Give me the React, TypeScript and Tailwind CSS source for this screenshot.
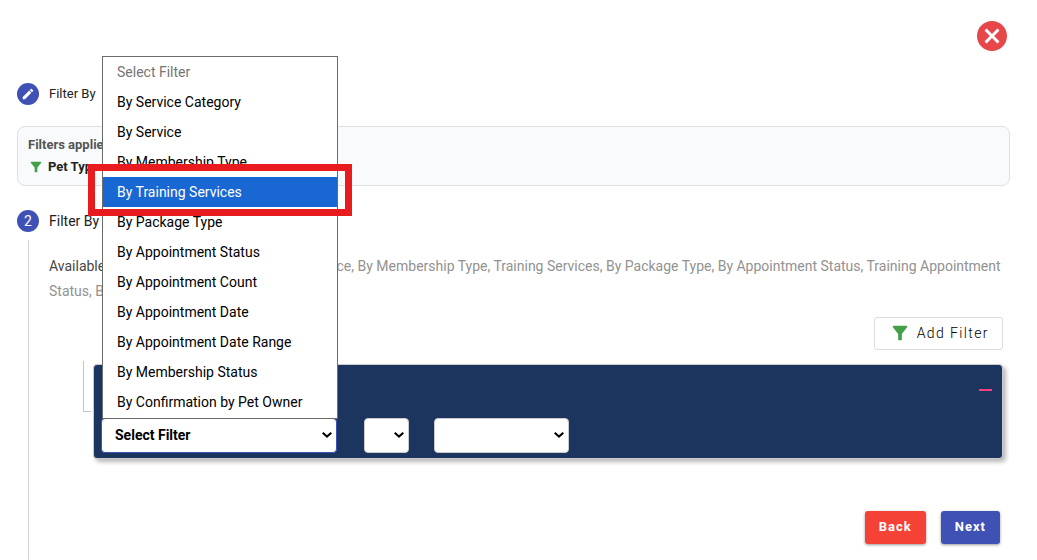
import React from "react";
import { MdCancel, MdEdit, MdFilterAlt } from "react-icons/md";

const filterOptions = [
  "Select Filter",
  "By Service Category",
  "By Service",
  "By Membership Type",
  "By Training Services",
  "By Package Type",
  "By Appointment Status",
  "By Appointment Count",
  "By Appointment Date",
  "By Appointment Date Range",
  "By Membership Status",
  "By Confirmation by Pet Owner",
];

const highlighted = "By Training Services";

function StepBadge({ children }: { children: React.ReactNode }) {
  return (
    <span className="flex size-[22px] shrink-0 items-center justify-center rounded-full bg-[#3f51b5] text-sm text-white">
      {children}
    </span>
  );
}

function SelectArrow() {
  return (
    <svg
      viewBox="0 0 10 6"
      aria-hidden="true"
      className="pointer-events-none absolute top-3.5 right-[5px] h-1.5 w-2.5"
      fill="none"
      stroke="#000000"
      strokeWidth="2"
    >
      <path d="M0.7 0.8 5 4.6 9.3 0.8" />
    </svg>
  );
}

function FilterMenu() {
  return (
    <ul
      role="listbox"
      aria-label="Filter options"
      className="absolute bottom-[34px] left-px z-10 w-full border border-[#6b6b6b] bg-white pb-px text-sm text-black"
    >
      {filterOptions.map((option, index) => {
        const active = option === highlighted;
        return (
          <li
            key={option}
            role="option"
            aria-selected={active}
            aria-disabled={index === 0}
            className={
              active
                ? "relative bg-[#1967d2] px-3.5 leading-[30px] text-white"
                : index === 0
                  ? "px-3.5 leading-[30px] text-[#757575]"
                  : "px-3.5 leading-[30px]"
            }
          >
            {option}
            {active && (
              <span className="absolute -inset-x-[15px] -top-[13px] -bottom-[9px] border-[7px] border-[#e81c1f]" />
            )}
          </li>
        );
      })}
    </ul>
  );
}

export default function App() {
  return (
    <main
      className="flex min-h-screen flex-col bg-white pr-[27px] pl-[17px] text-[#212121]"
      style={{ fontFamily: 'Roboto, "Liberation Sans", sans-serif' }}
    >
      <header className="flex justify-end pt-[18px]">
        <button type="button" aria-label="Close" className="text-[#e84749]">
          <MdCancel size={36} />
        </button>
      </header>

      <h2 className="mt-[29px] flex items-center gap-2.5 text-[13px]">
        <StepBadge>
          <MdEdit size={14} />
        </StepBadge>
        Filter By
      </h2>

      <section className="mt-[21px] rounded-lg border border-[#dfdfdf] bg-[#f8fafc] px-2.5 pt-1.5 pb-[7px] text-[13px] font-bold">
        <p className="leading-[23px] text-[#555555]">Filters applied:</p>
        <p className="flex items-center gap-1 leading-[22px] text-[#222222]">
          <MdFilterAlt size={16} className="text-[#43a047]" />
          Pet Type
        </p>
      </section>

      <h2 className="mt-6 flex items-center gap-2.5 text-sm">
        <StepBadge>2</StepBadge>
        Filter By
      </h2>

      <div className="mt-2 flex flex-1 gap-2.5">
        <div className="flex w-[22px] shrink-0 justify-center">
          <div className="w-px bg-[#d5d5d5]" />
        </div>

        <div className="min-w-0 flex-1 pt-3.5">
          <p className="text-sm leading-[25px] text-[#929292]">
            <span className="text-[#484848]">Available Filters :</span> By Service Category, By Service, By
            Membership Type, Training Services, By Package Type, By Appointment Status, Training Appointment
            Status, By
          </p>

          <div className="mt-[13px] flex justify-end pr-[7px]">
            <button
              type="button"
              className="flex h-[33px] items-center gap-1.5 rounded-[3px] border border-[#dddddd] pr-[13px] pb-0.5 pl-3.5 text-sm font-light tracking-[1.4px] text-black"
            >
              <MdFilterAlt size={22} className="text-[#43a047]" />
              Add Filter
            </button>
          </div>

          <div className="mt-[11px] flex items-start pr-[7px] pl-[34px]">
            <div className="mr-0.5 h-[51px] w-2 shrink-0 border-b border-l border-[#c4c4c4]" />
            <section className="mt-[3px] min-w-0 flex-1 rounded border border-[#cccccc] bg-[#1c355e] px-[7px] pb-[5px] shadow-[3px_3px_4px_rgba(0,0,0,0.28)]">
              <div className="mb-[3px] flex h-[50px] items-center justify-end pr-[3px]">
                <button
                  type="button"
                  aria-label="Remove filter"
                  className="flex h-6 w-[13px] items-center"
                >
                  <span className="h-0.5 w-full bg-[#ff4081]" />
                </button>
              </div>
              <div className="flex">
                <div className="relative mr-[27px] w-[236px]">
                  <FilterMenu />
                  <select
                    aria-label="Filter"
                    className="h-[35px] w-full appearance-none rounded border border-[#3f51b5] bg-white px-[13px] pb-px text-sm font-bold text-black"
                  >
                    {filterOptions.map((option) => (
                      <option key={option}>{option}</option>
                    ))}
                  </select>
                  <SelectArrow />
                </div>
                <div className="relative mr-[25px] w-[45px]">
                  <select
                    aria-label="Operator"
                    className="h-[35px] w-full appearance-none rounded border border-[#cccccc] bg-white text-sm text-black"
                  />
                  <SelectArrow />
                </div>
                <div className="relative w-[135px]">
                  <select
                    aria-label="Value"
                    className="h-[35px] w-full appearance-none rounded border border-[#cccccc] bg-white text-sm text-black"
                  />
                  <SelectArrow />
                </div>
              </div>
            </section>
          </div>

          <div className="mt-[52px] flex justify-end gap-[15px] pr-2.5 pb-4 text-[13px] font-bold tracking-[1px] text-white">
            <button
              type="button"
              className="h-[33px] rounded-[3px] bg-[#f44336] px-3.5 pb-0.5 shadow-[0_1px_3px_rgba(0,0,0,0.4)]"
            >
              Back
            </button>
            <button
              type="button"
              className="h-[33px] rounded-[3px] bg-[#3f51b5] px-3.5 pb-0.5 shadow-[0_1px_3px_rgba(0,0,0,0.4)]"
            >
              Next
            </button>
          </div>
        </div>
      </div>
    </main>
  );
}
